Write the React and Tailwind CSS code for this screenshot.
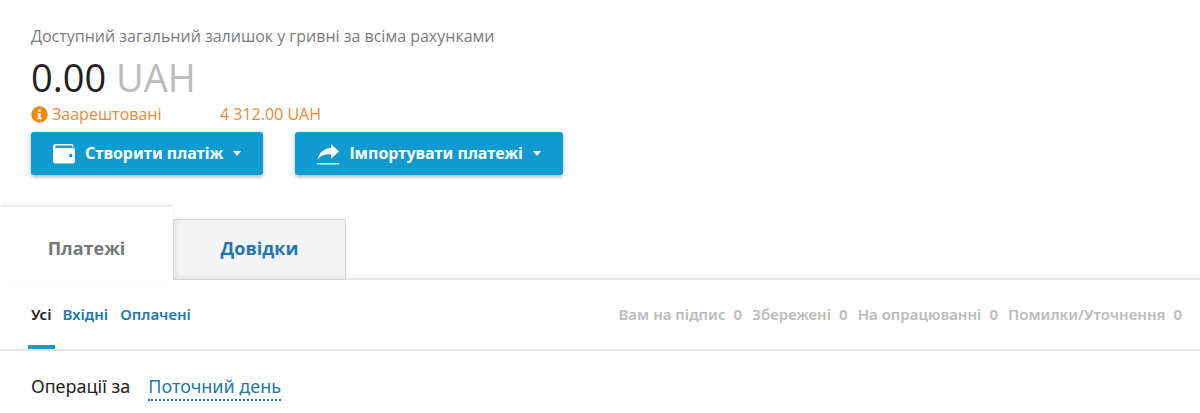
const filters = ["Усі", "Вхідні", "Оплачені"];

const counters = [
  { label: "Вам на підпис", count: 0 },
  { label: "Збережені", count: 0 },
  { label: "На опрацюванні", count: 0 },
  { label: "Помилки/Уточнення", count: 0 },
];

function WalletIcon() {
  return (
    <svg width="22" height="20" viewBox="0 0 22 20" aria-hidden="true">
      <path
        fill="#fff"
        fillRule="evenodd"
        d="M3 0h15.500a2 2 0 0 1 2 2v1.200h-1.200V2.400a.8.8 0 0 0-.8-.8H3.200a1.100 1.100 0 0 0 0 2.400H20a2 2 0 0 1 2 2V17.500a2 2 0 0 1-2 2H2.500A2.500 2.500 0 0 1 0 17V3a3 3 0 0 1 3-3zM17.800 9.800a1.700 1.700 0 1 0 0 3.400 1.700 1.700 0 0 0 0-3.400z"
      />
    </svg>
  );
}

function ShareIcon() {
  return (
    <svg width="22" height="22" viewBox="0 0 22 22" aria-hidden="true">
      <path
        fill="#fff"
        d="M14 1l8 7.500-8 7.200v-4.400C8 10.800 3.500 12.500 0.500 16.500 2 10 6.500 5.500 14 5z"
      />
      <path fill="#fff" d="M0 20h22v1.500H0z" />
    </svg>
  );
}

function InfoIcon() {
  return (
    <svg width="17" height="17" viewBox="0 0 17 17" aria-hidden="true">
      <circle cx="8.500" cy="8.500" r="8.300" fill="#ee8a0c" />
      <circle cx="8.500" cy="4.700" r="1.400" fill="#fff" />
      <path fill="#fff" d="M6.500 7h3.200v4.700h1v1.500H6.300v-1.500h1V8.400h-.8z" />
    </svg>
  );
}

function ActionButton({ icon, children }) {
  return (
    <button
      type="button"
      className="flex h-[43px] items-center rounded-[3px] bg-[#109bd0] px-[22px] font-['Noto_Sans',sans-serif] text-base font-bold text-white shadow-[0_2px_4px_rgba(0,0,0,0.3)]"
    >
      {icon}
      <span className="ml-[10px] pb-[2px]">{children}</span>
      <svg className="ml-[10px]" width="8" height="5" viewBox="0 0 8 5" aria-hidden="true">
        <path fill="#fff" d="M0 0h8L4 5z" />
      </svg>
    </button>
  );
}

export default function App() {
  return (
    <main className="bg-white pb-2 font-['Open_Sans','Noto_Sans',sans-serif] text-[#222]">
      <section className="px-[31px] pt-6">
        <p className="text-base text-[#7b7b7f]">
          Доступний загальний залишок у гривні за всіма рахунками
        </p>
        <p className="mt-1 text-[38px] leading-[50px]">
          0.00 <span className="text-[#bbb]">UAH</span>
        </p>
        <div className="flex h-6 items-center text-base text-[#e8893a]">
          <InfoIcon />
          <span className="ml-1 w-[168px]">Заарештовані</span>
          <span>4 312.00 UAH</span>
        </div>
        <div className="mt-[6px] flex gap-8">
          <ActionButton icon={<WalletIcon />}>Створити платіж</ActionButton>
          <ActionButton icon={<ShareIcon />}>Імпортувати платежі</ActionButton>
        </div>
      </section>

      <div className="mt-8 flex items-end text-lg font-bold" role="tablist">
        <button
          type="button"
          role="tab"
          aria-selected="true"
          className="h-[73px] w-[173px] pt-2 text-[#777] shadow-[0_-2px_4px_rgba(0,0,0,0.1)]"
        >
          Платежі
        </button>
        <button
          type="button"
          role="tab"
          aria-selected="false"
          className="h-[61px] w-[173px] rounded-t-[2px] border border-[#d3d3d3] bg-[#f4f4f4] pb-1 text-[#1f78ad] shadow-[inset_3px_-2px_5px_rgba(0,0,0,0.06)]"
        >
          Довідки
        </button>
        <div className="h-2 flex-1 border-b-2 border-[#e6e6e6] bg-linear-to-b from-white to-[#f7f7f7]" />
      </div>

      <div className="flex h-[71px] items-stretch justify-between border-b-2 border-[#e4e4e4] bg-white pr-[18px] pl-7 font-['Noto_Sans',sans-serif] text-[15px] font-semibold">
        <nav className="flex">
          {filters.map((name, i) => (
            <a
              key={name}
              href="#"
              className={
                i === 0
                  ? "mr-[6px] flex items-center border-b-4 border-[#1e9bc9] px-[3px] pt-1 text-[#222]"
                  : "mr-2 flex items-center px-[2px] text-[#1f78ad]"
              }
            >
              {name}
            </a>
          ))}
        </nav>
        <div className="flex items-center gap-[10px] text-[#bbb]">
          {counters.map((item) => (
            <span key={item.label} className="flex gap-2">
              <span>{item.label}</span>
              <span>{item.count}</span>
            </span>
          ))}
        </div>
      </div>

      <div className="flex px-[31px] pt-[22px] font-['Noto_Sans',sans-serif] text-lg leading-[26px]">
        <span>Операції за</span>
        <button
          type="button"
          className="ml-[18px] border-b-2 border-dotted border-[#1f78ad] text-[#1f78ad]"
        >
          Поточний день
        </button>
      </div>
    </main>
  );
}
